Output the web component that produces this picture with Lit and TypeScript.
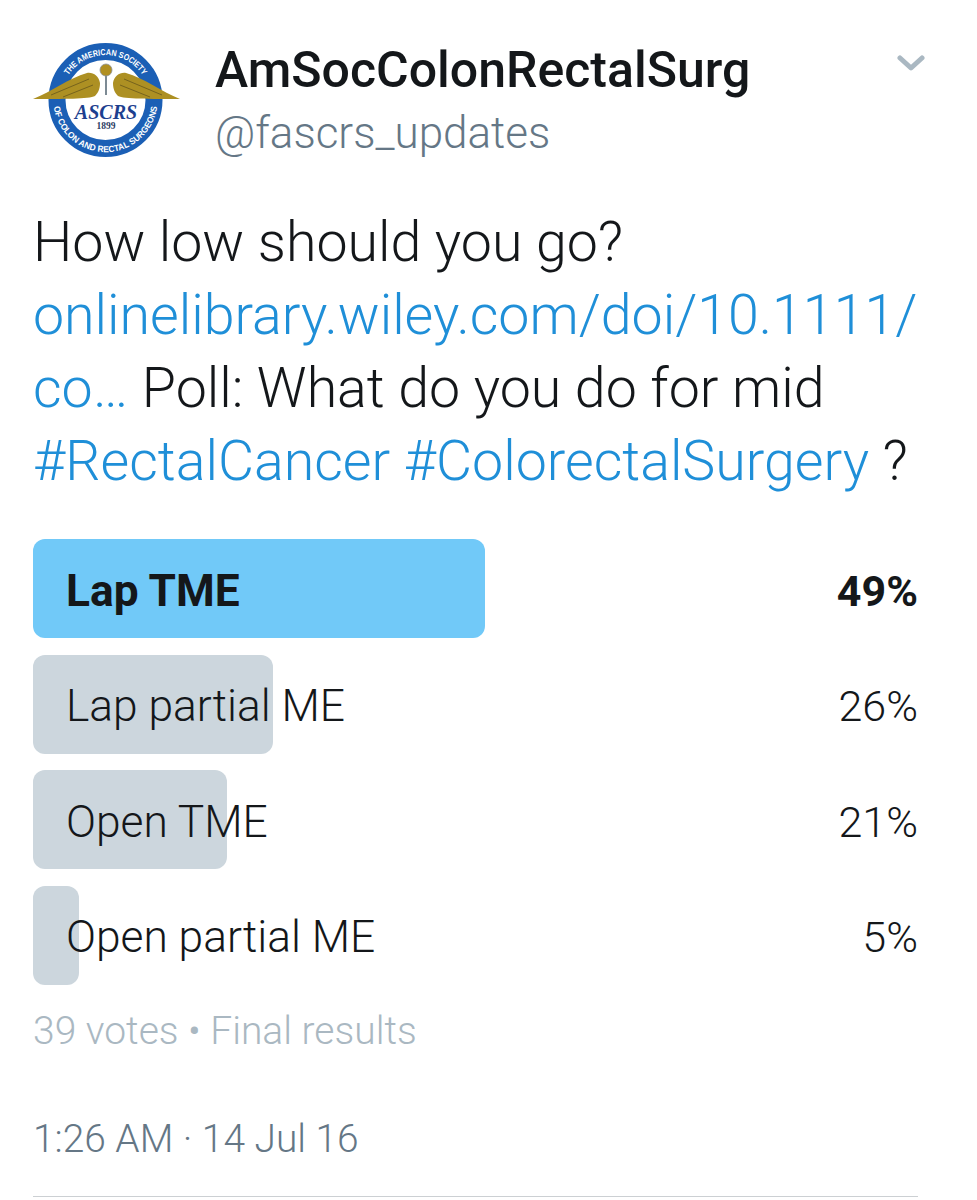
import { LitElement, html, css, svg } from "lit";
import { customElement } from "lit/decorators.js";

const options = [
  { label: "Lap TME", pct: 49, width: 452, winner: true },
  { label: "Lap partial ME", pct: 26, width: 240, winner: false },
  { label: "Open TME", pct: 21, width: 194, winner: false },
  { label: "Open partial ME", pct: 5, width: 46, winner: false },
];

const logo = svg`
<svg class="logo" viewBox="0 0 147 118" width="147" height="118" aria-hidden="true">
  <defs>
    <path id="arcTop" d="M 34 82 A 44.5 44.5 0 1 1 111 82" />
    <path id="arcBottom" d="M 21 53 A 52 52 0 1 0 124 53" />
  </defs>
  <circle cx="72.5" cy="60" r="48.5" fill="#fff" stroke="#1b5fb5" stroke-width="17" />
  <text class="ring" font-size="8.6"><textPath href="#arcTop" startOffset="50%" text-anchor="middle" textLength="88" lengthAdjust="spacingAndGlyphs">THE AMERICAN SOCIETY</textPath></text>
  <text class="ring" font-size="8.8"><textPath href="#arcBottom" startOffset="50%" text-anchor="middle" textLength="150" lengthAdjust="spacingAndGlyphs">OF COLON AND RECTAL SURGEONS</textPath></text>
  <line x1="73" y1="30" x2="73" y2="55" stroke="#7c8a94" stroke-width="2" />
  <circle cx="73" cy="30" r="6" fill="#b08f22" stroke="#8a9098" stroke-width="0.8" />
  <path d="M0 59 C 18 52 36 38 54 33 C 60 32 66 36 67 43 C 67 49 65 53 62 56 C 56 59 30 59 0 59 Z" fill="#ad9023" />
  <path d="M147 59 C 129 52 111 38 93 33 C 87 32 81 36 80 43 C 80 49 82 53 85 56 C 91 59 117 59 147 59 Z" fill="#ad9023" />
  <path d="M18 55 L56 39 M30 57 L60 45 M129 55 L91 39 M117 57 L87 45" stroke="#6f5e1c" stroke-width="0.9" fill="none" />
  <text class="ascrs" x="73" y="79" text-anchor="middle" font-size="20">ASCRS</text>
  <text class="year" x="73" y="89" text-anchor="middle" font-size="9.5">1899</text>
</svg>`;

@customElement("app-root")
export class AppRoot extends LitElement {
  static styles = css`
    :host {
      display: block;
      width: 977px;
      height: 1200px;
      background: #fff;
      overflow: hidden;
      font-family: Roboto, "Noto Sans", sans-serif;
      color: #14171a;
    }
    .page {
      padding: 40px 59px 0 33px;
      display: flex;
      flex-direction: column;
    }
    .header {
      display: flex;
      align-items: flex-start;
      height: 166px;
    }
    .logo {
      display: block;
      flex: none;
      margin-right: 35px;
    }
    .ring {
      fill: #fff;
      font-family: "Liberation Sans", sans-serif;
      font-weight: 700;
    }
    .ascrs {
      fill: #1d3f8f;
      font-family: "Liberation Serif", serif;
      font-style: italic;
      font-weight: 700;
    }
    .year {
      fill: #2c3e63;
      font-family: "Liberation Serif", serif;
      font-weight: 700;
    }
    .who {
      flex: 1;
      display: flex;
      flex-direction: column;
    }
    .name {
      font-size: 50px;
      line-height: 60px;
      font-weight: 500;
    }
    .handle {
      font-size: 44px;
      line-height: 66px;
      font-weight: 300;
      color: #657786;
    }
    .chevron {
      flex: none;
      margin: 14px -9px 0 0;
    }
    .tweet {
      font-size: 55.5px;
      line-height: 73px;
      font-weight: 300;
      margin: 0;
      white-space: nowrap;
    }
    .link {
      color: #1f8fd8;
    }
    .poll {
      margin-top: 41px;
      display: flex;
      flex-direction: column;
      gap: 16.67px;
    }
    .row {
      position: relative;
      box-sizing: border-box;
      height: 99px;
      padding-top: 4px;
      display: flex;
      align-items: center;
      justify-content: space-between;
      font-size: 44.3px;
      font-weight: 300;
    }
    .row.winner {
      font-weight: 700;
    }
    .bar {
      position: absolute;
      left: 0;
      top: 0;
      bottom: 0;
      border-radius: 12px;
      background: #ccd6dd;
    }
    .winner .bar {
      background: #71c9f8;
    }
    .label {
      position: relative;
      margin-left: 33px;
    }
    .pct {
      position: relative;
      font-size: 43px;
    }
    .meta {
      font-size: 39px;
      line-height: 46px;
      font-weight: 300;
    }
    .votes {
      margin-top: 23px;
      color: #aab8c2;
    }
    .time {
      margin-top: 62px;
      font-size: 38.9px;
      color: #657786;
    }
    .rule {
      margin-top: 34px;
      height: 1px;
      background: #ccd0d3;
      width: 885px;
    }
  `;

  render() {
    return html`
      <div class="page">
        <div class="header">
          ${logo}
          <div class="who">
            <div class="name">AmSocColonRectalSurg</div>
            <div class="handle">@fascrs_updates</div>
          </div>
          <svg class="chevron" width="30" height="20" viewBox="0 0 30 20" aria-hidden="true">
            <path d="M3 4 L14 14 L25 4" fill="none" stroke="#aab8c2" stroke-width="5" stroke-linecap="round" stroke-linejoin="round" />
          </svg>
        </div>
        <p class="tweet">How low should you go?<br /><span class="link">onlinelibrary.wiley.com/doi/10.1111/</span><br /><span class="link">co…</span> Poll: What do you do for mid<br /><span class="link">#RectalCancer #ColorectalSurgery</span> ?</p>
        <div class="poll">
          ${options.map(
            (o) => html`
              <div class="row ${o.winner ? "winner" : ""}">
                <div class="bar" style="width:${o.width}px"></div>
                <span class="label">${o.label}</span>
                <span class="pct">${o.pct}%</span>
              </div>
            `
          )}
        </div>
        <div class="meta votes">39 votes • Final results</div>
        <div class="meta time">1:26 AM · 14 Jul 16</div>
        <div class="rule"></div>
      </div>
    `;
  }
}
